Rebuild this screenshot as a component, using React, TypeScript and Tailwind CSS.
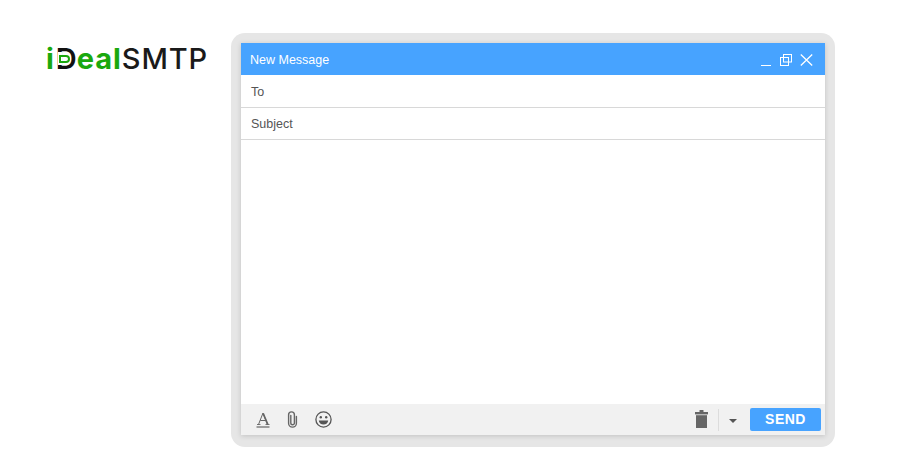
function MinimizeIcon() {
  return <div className="h-px w-[10px] bg-white mt-[10px]" />
}

function RestoreIcon() {
  return (
    <svg width="12" height="12" viewBox="0 0 12 12" fill="none" stroke="white" strokeWidth="1">
      <rect x="3.5" y="0.5" width="8" height="7.5" />
      <rect x="0.5" y="3.5" width="8" height="8" />
    </svg>
  )
}

function CloseIcon() {
  return (
    <svg width="13" height="12" viewBox="0 0 13 12" fill="none" stroke="white" strokeWidth="1.3">
      <path d="M0.8 0.5 L12.2 11.5 M12.2 0.5 L0.8 11.5" />
    </svg>
  )
}

function FontIcon() {
  return (
    <svg width="14" height="16" viewBox="0 0 14 16" fill="none" stroke="#666">
      <path d="M2.5 12.5 L7 1 L11.5 12.5" strokeWidth="1" />
      <path d="M7.2 1.5 L11.8 12.5" strokeWidth="1.8" />
      <path d="M4.3 8.5h5.5" strokeWidth="1" />
      <path d="M1 12.5h3.5M9.5 12.5h4" strokeWidth="0.9" />
      <path d="M0.5 15h13" strokeWidth="1.2" />
    </svg>
  )
}

function ClipIcon() {
  return (
    <svg width="11" height="17" viewBox="0 0 11 17" fill="none" stroke="#666" strokeWidth="1.4" strokeLinecap="round">
      <path d="M3.8 4.5 V12 a1.8 1.8 0 0 0 3.6 0 V3.8 a2.9 2.9 0 0 0 -5.8 0 V12.2 a3.9 3.9 0 0 0 7.8 0 V5.5" />
    </svg>
  )
}

function SmileIcon() {
  return (
    <svg width="17" height="17" viewBox="0 0 17 17" fill="none">
      <circle cx="8.5" cy="8.5" r="7.6" stroke="#555" strokeWidth="1.3" />
      <circle cx="5.8" cy="6.2" r="1.2" fill="#555" />
      <circle cx="11.2" cy="6.2" r="1.2" fill="#555" />
      <path d="M3.8 9.4 H13.2 A4.7 4 0 0 1 3.8 9.4 Z" fill="#555" />
    </svg>
  )
}

function TrashIcon() {
  return (
    <svg width="13" height="18" viewBox="0 0 13 18" fill="#666">
      <rect x="4.5" y="0" width="4" height="2.5" rx="0.5" />
      <rect x="0" y="2" width="13" height="2.4" />
      <rect x="1" y="5.2" width="11" height="12.8" />
    </svg>
  )
}

function Logo() {
  return (
    <div className="flex items-baseline text-[29px] leading-none font-['Inter',sans-serif]">
      <span className="font-bold text-[#1aa80e]">i</span>
      <span className="relative ml-[2px] font-semibold text-[#111]">
        D
        <span className="absolute left-[2px] top-[8px] h-[13px] w-[4px] bg-white" />
        <span className="absolute left-[3px] top-[11px] h-[8px] w-[11px] rounded-r-[4px] border-2 border-[#1aa80e]" />
      </span>
      <span className="font-bold text-[#1aa80e] tracking-[0.9px]">eal</span>
      <span className="font-medium text-[#1a1a1a] tracking-[0.9px]">SMTP</span>
    </div>
  )
}

export default function App() {
  return (
    <div className="h-[460px] w-[900px] bg-white flex overflow-hidden font-['Liberation_Sans',Arial,sans-serif]">
      <div className="w-[231px] pl-[46px] pt-[44px]">
        <Logo />
      </div>

      <div className="mt-[33px] h-[414px] w-[604px] rounded-[14px] bg-[#e6e6e6] pt-[10px] px-[10px] pb-[12px]">
        <div className="h-full flex flex-col bg-white shadow-[0_1px_5px_rgba(0,0,0,0.16)]">
          <div className="h-[32px] bg-[#47a3ff] flex items-center pl-[9px] pr-[12px] pt-[2px] text-white">
            <span className="text-[12.5px]">New Message</span>
            <div className="ml-auto flex items-center">
              <MinimizeIcon />
              <div className="ml-[9px]">
                <RestoreIcon />
              </div>
              <div className="ml-[8px]">
                <CloseIcon />
              </div>
            </div>
          </div>

          <div className="h-[33px] flex items-center pl-[10px] pt-[3px] border-b border-[#d8d8d8] text-[12.5px] text-[#555]">
            To
          </div>
          <div className="h-[32px] flex items-center pl-[10px] pt-[1px] border-b border-[#d8d8d8] text-[12.5px] text-[#555]">
            Subject
          </div>

          <div className="flex-1" />

          <div className="h-[31px] bg-[#f1f1f1] flex items-center pl-[15px] pr-[4px]">
            <FontIcon />
            <div className="ml-[17px]">
              <ClipIcon />
            </div>
            <div className="ml-[17px]">
              <SmileIcon />
            </div>

            <div className="ml-auto flex items-center">
              <div className="-mt-[1px]">
                <TrashIcon />
              </div>
              <div className="h-[22px] w-px bg-[#dcdcdc] ml-[10px]" />
              <div className="ml-[10px] border-x-[4px] border-x-transparent border-t-[4px] border-t-[#555] mt-[2px]" />
              <div className="ml-[13px] h-[23px] w-[71px] rounded-[2px] bg-[#47a3ff] flex items-center justify-center text-white text-[14px] font-bold tracking-[0.5px]">
                SEND
              </div>
            </div>
          </div>
        </div>
      </div>
    </div>
  )
}
